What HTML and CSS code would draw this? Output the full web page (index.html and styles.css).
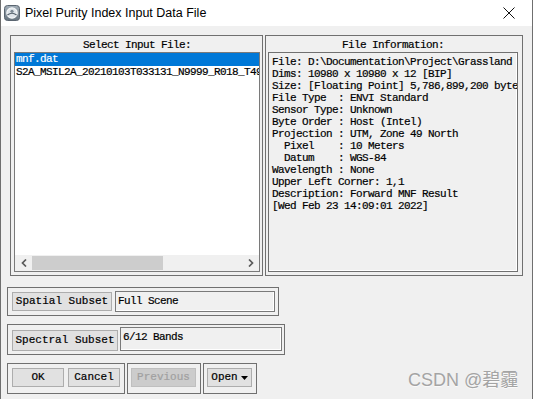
FILE: index.html
```html
<!DOCTYPE html>
<html lang="en">
<head>
  <meta charset="UTF-8" />
  <title>Pixel Purity Index Input Data File</title>
  <link rel="stylesheet" href="styles.css">
</head>
<body>
  <div class="window">
    <div class="titlebar">
      <svg class="app-icon" viewBox="0 0 16 16">
        <defs>
          <linearGradient id="icoGrad" x1="0" y1="0" x2="0" y2="1">
            <stop offset="0" stop-color="#a3afb9"/>
            <stop offset="1" stop-color="#66737e"/>
          </linearGradient>
        </defs>
        <rect x="0.5" y="0.5" width="15" height="15" rx="3" fill="url(#icoGrad)" stroke="#5a6570"/>
        <circle cx="8" cy="8" r="5.2" fill="#dfe5ea" stroke="#f5f7f9" stroke-width="1.2"/>
        <path d="M3.4 10 Q8 6.5 12.6 10" stroke="#56626d" stroke-width="1.2" fill="none"/>
        <circle cx="8" cy="6.3" r="1.6" fill="#7c8894"/>
      </svg>
      <span class="title">Pixel Purity Index Input Data File</span>
      <svg class="close" viewBox="0 0 12 12">
        <path d="M0.5 0.5 L11.5 11.5 M11.5 0.5 L0.5 11.5" stroke="#111" stroke-width="1"/>
      </svg>
    </div>

    <div class="content">
      <div class="panels">
        <div class="panel panel-left">
          <div class="panel-label">Select Input File:</div>
          <div class="listbox">
            <div class="list-items">
              <div class="list-item selected">mnf.dat</div>
              <div class="list-item">S2A_MSIL2A_20210103T033131_N9999_R018_T49SGR_20210103T062325.dat</div>
            </div>
            <div class="hscroll">
              <div class="arrow">
                <svg width="6" height="8" viewBox="0 0 6 8"><path d="M5 0.5 L1.5 4 L5 7.5" stroke="#5a5a5a" stroke-width="1.7" fill="none"/></svg>
              </div>
              <div class="track"><div class="thumb"></div></div>
              <div class="arrow">
                <svg width="6" height="8" viewBox="0 0 6 8"><path d="M1 0.5 L4.5 4 L1 7.5" stroke="#5a5a5a" stroke-width="1.7" fill="none"/></svg>
              </div>
            </div>
          </div>
        </div>

        <div class="panel panel-right">
          <div class="panel-label">File Information:</div>
          <div class="info">File: D:\Documentation\Project\Grassland
Dims: 10980 x 10980 x 12 [BIP]
Size: [Floating Point] 5,786,899,200 bytes
File Type  : ENVI Standard
Sensor Type: Unknown
Byte Order : Host (Intel)
Projection : UTM, Zone 49 North
  Pixel    : 10 Meters
  Datum    : WGS-84
Wavelength : None
Upper Left Corner: 1,1
Description: Forward MNF Result
[Wed Feb 23 14:09:01 2022]</div>
        </div>
      </div>

      <div class="frame spatial">
        <button class="btn">Spatial Subset</button>
        <div class="field">Full Scene</div>
      </div>

      <div class="frame spectral">
        <button class="btn">Spectral Subset</button>
        <div class="field">6/12 Bands</div>
      </div>

      <div class="actions">
        <div class="frame group-main">
          <button class="btn btn-small">OK</button>
          <button class="btn btn-small">Cancel</button>
        </div>
        <div class="frame group-prev">
          <button class="btn btn-prev" disabled>Previous</button>
        </div>
        <div class="frame group-open">
          <button class="btn btn-open">Open<svg width="7" height="4" viewBox="0 0 7 4"><path d="M0 0 H7 L3.5 4 Z" fill="#000"/></svg></button>
        </div>
      </div>
    </div>

    <div class="watermark">CSDN @碧霾</div>
  </div>
</body>
</html>
```

FILE: styles.css
```css
body {
  margin: 0;
  background: #fff;
  font-family: "Liberation Mono", "DejaVu Sans Mono", monospace;
  font-size: 11px;
  letter-spacing: -0.6px;
  color: #000;
  -webkit-text-stroke: 0.2px #000;
}
.window {
  position: relative;
  width: 533px;
  height: 399px;
  box-sizing: border-box;
  border-left: 1px solid #6f6f6f;
  border-right: 1px solid #6f6f6f;
  background: #f0f0f0;
  overflow: hidden;
}
.titlebar {
  height: 26px;
  background: #fff;
  display: flex;
  align-items: center;
  padding-left: 3px;
}
.app-icon {
  width: 16px;
  height: 16px;
}
.title {
  margin-left: 5px;
  font-family: "Liberation Sans", Arial, sans-serif;
  font-size: 12.5px;
  letter-spacing: 0;
  -webkit-text-stroke: 0;
}
.close {
  width: 12px;
  height: 12px;
  margin-left: auto;
  margin-right: 17px;
}
.content {
  padding: 9px 0 0 6px;
}
.panels {
  display: flex;
  gap: 2px;
  margin-left: 3px;
}
.panel {
  height: 241px;
  box-sizing: border-box;
  border: 1px solid #707070;
}
.panel-left {
  width: 253px;
  padding: 0 2px 3px 3px;
}
.panel-right {
  width: 258px;
  padding: 0 4px 3px 2px;
}
.panel-label {
  height: 16px;
  box-sizing: border-box;
  padding-top: 2px;
  line-height: 14px;
  text-align: center;
}
.listbox {
  height: 220px;
  box-sizing: border-box;
  border: 1px solid #7a7a7a;
  background: #fff;
  display: flex;
  flex-direction: column;
}
.list-items {
  flex: 1;
  overflow: hidden;
}
.list-item {
  height: 13px;
  line-height: 13px;
  padding-left: 1px;
  white-space: nowrap;
  overflow: hidden;
}
.list-item.selected {
  background: #0078d7;
  color: #fff;
  -webkit-text-stroke: 0.2px #fff;
}
.hscroll {
  height: 16px;
  display: flex;
  background: #f0f0f0;
}
.arrow {
  width: 17px;
  display: flex;
  align-items: center;
  justify-content: center;
}
.track {
  flex: 1;
  display: flex;
  padding: 1px 0;
}
.thumb {
  width: 131px;
  background: #cdcdcd;
}
.info {
  height: 220px;
  box-sizing: border-box;
  border: 1px solid #707070;
  box-shadow: inset -1px -1px 0 #fff;
  padding: 3px 0 0 3px;
  line-height: 12px;
  white-space: pre;
  overflow: hidden;
}
.frame {
  box-sizing: border-box;
  border: 1px solid #707070;
  display: flex;
  align-items: center;
}
.btn {
  box-sizing: border-box;
  border: 1px solid #adadad;
  background: #e1e1e1;
  font: inherit;
  color: #000;
  padding: 0;
  line-height: 15px;
  text-align: center;
}
.field {
  box-sizing: border-box;
  border: 1px solid #7a7a7a;
  box-shadow: inset -1px -1px 0 #fff;
  background: #f0f0f0;
  padding: 3px 2px 0;
  line-height: 12px;
  white-space: nowrap;
  align-self: flex-start;
}
.spatial {
  width: 272px;
  height: 29px;
  margin-top: 11px;
  padding: 3px 3px 3px 4px;
  gap: 3px;
}
.spatial .btn {
  width: 100px;
  height: 19px;
}
.spatial .field {
  width: 160px;
  height: 21px;
}
.spectral {
  width: 278px;
  height: 31px;
  margin-top: 8px;
  padding: 2px 2px 3px 4px;
  gap: 2px;
}
.spectral .btn {
  width: 106px;
  height: 21px;
  align-self: center;
  margin-top: 2px;
}
.spectral .field {
  width: 162px;
  height: 24px;
}
.actions {
  display: flex;
  gap: 2px;
  margin-top: 8px;
}
.actions .frame {
  height: 31px;
  align-items: flex-start;
  padding-top: 4px;
}
.actions .btn {
  height: 19px;
}
.group-main {
  width: 118px;
  padding-left: 4px;
  gap: 4px;
}
.btn-small {
  width: 52px;
}
.group-prev {
  width: 74px;
  padding-left: 3px;
}
.btn-prev {
  width: 65px;
  background: #cccccc;
  border-color: #bfbfbf;
  color: #a0a0a0;
  -webkit-text-stroke: 0.2px #a0a0a0;
}
.group-open {
  width: 54px;
  padding-left: 3px;
}
.btn-open {
  width: 45px;
  display: flex;
  align-items: center;
  justify-content: center;
  gap: 3px;
}
.watermark {
  position: absolute;
  left: 407px;
  bottom: 8px;
  font-family: "Liberation Sans", "Noto Sans CJK SC", sans-serif;
  font-size: 18px;
  letter-spacing: 0;
  color: #a4a4a4;
  -webkit-text-stroke: 0;
  text-shadow: 0 1px 0 #fafafa;
}
```
